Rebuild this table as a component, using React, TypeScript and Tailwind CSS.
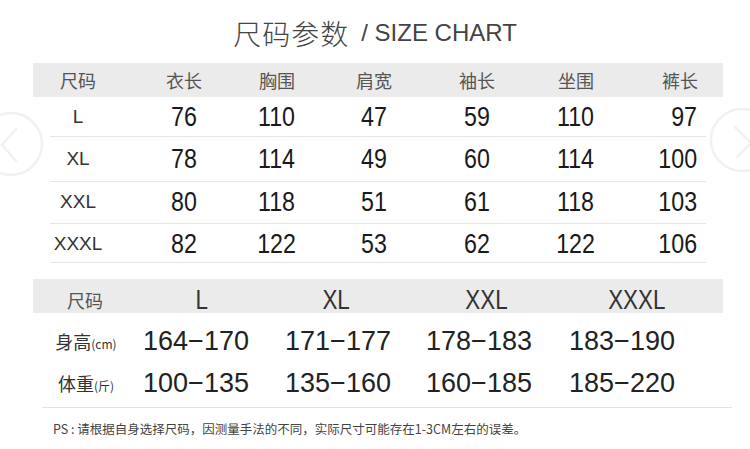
const cjk = '"Noto Sans CJK SC", sans-serif';

const cols1 = 'grid grid-cols-[90px_122px_64px_130px_76px_122px_86px]';

const rows1 = [
  { size: 'L', vals: ['76', '110', '47', '59', '110', '97'], h: 'h-[39px]' },
  { size: 'XL', vals: ['78', '114', '49', '60', '114', '100'], h: 'h-[44px]' },
  { size: 'XXL', vals: ['80', '118', '51', '61', '118', '103'], h: 'h-[41px]' },
  { size: 'XXXL', vals: ['82', '122', '53', '62', '122', '106'], h: 'h-[38px]' },
];

const head1 = ['尺码', '衣长', '胸围', '肩宽', '袖长', '坐围', '裤长'];

function Watermark({ dir }: { dir: 'left' | 'right' }) {
  return (
    <svg width="70" height="70" viewBox="0 0 70 70" fill="none" stroke="#f1f1f1" strokeWidth="2.5" strokeLinecap="round">
      <circle cx="35" cy="35" r="31" />
      {dir === 'left' ? (
        <path d="M40 20 L26 36 L40 52" />
      ) : (
        <path d="M28 22 L44 38 L30 52" />
      )}
    </svg>
  );
}

export default function App() {
  return (
    <div className="relative w-[750px] h-[449px] overflow-hidden bg-white" style={{ fontFamily: '"Liberation Sans", "Noto Sans CJK SC", sans-serif' }}>
      {/* slider arrows, faded */}
      <div className="absolute left-[-24px] top-[109px]"><Watermark dir="left" /></div>
      <div className="absolute left-[707px] top-[105px]"><Watermark dir="right" /></div>

      {/* Title */}
      <div className="relative h-[63px] flex items-center justify-center pt-[2px] text-[#444]">
        <span className="text-[28px] font-light tracking-[1px]" style={{ fontFamily: cjk }}>尺码参数</span>
        <span className="ml-[12px] text-[24px] font-light">/ SIZE CHART</span>
      </div>

      {/* Table 1 */}
      <div className="relative ml-[33px] w-[690px]">
        <div className={`${cols1} h-[34px] items-center bg-[#ebebeb] text-[18px] text-[#555]`} style={{ fontFamily: cjk }}>
          {head1.map((h) => (
            <div key={h} className="text-center">{h}</div>
          ))}
        </div>
        {rows1.map((r) => (
          <div key={r.size}>
            <div className={`${cols1} ${r.h} items-center text-[27px] text-[#1a1a1a]`}>
              <div className="text-center text-[19px] text-[#333]">{r.size}</div>
              {r.vals.map((v, i) => (
                <div key={i} className={i === 5 ? 'text-right pr-[26px]' : 'text-center'}>
                  <span className={`inline-block scale-x-[0.86] ${i === 5 ? 'origin-right' : 'origin-center'}`}>{v}</span>
                </div>
              ))}
            </div>
            <div className="mx-[17px] h-px bg-[#e6e6e6]" />
          </div>
        ))}
      </div>

      {/* Table 2 */}
      <div className="relative ml-[33px] mt-[16px] w-[690px]">
        <div className="grid grid-cols-[104px_130px_138px_162px_140px] h-[34px] items-center bg-[#ebebeb] text-[#333]">
          <div className="text-center text-[18px] text-[#555]" style={{ fontFamily: cjk }}>尺码</div>
          {['L', 'XL', 'XXL', 'XXXL'].map((s) => (
            <div key={s} className="text-center text-[28px]">
              <span className="inline-block scale-x-[0.8]">{s}</span>
            </div>
          ))}
        </div>
        <div className="pt-[7px]">
          {[
            { label: '身高', unit: '(cm)', vals: ['164−170', '171−177', '178−183', '183−190'] },
            { label: '体重', unit: '(斤)', vals: ['100−135', '135−160', '160−185', '185−220'] },
          ].map((r) => (
            <div key={r.label} className="grid grid-cols-[106px_114px_170px_112px_174px] h-[42px] items-center text-[27px] text-[#222]">
              <div className="flex items-baseline justify-center text-[#333]" style={{ fontFamily: cjk }}>
                <span className="text-[18px]">{r.label}</span>
                <span className="text-[12px]">{r.unit}</span>
              </div>
              {r.vals.map((v) => (
                <div key={v} className="text-center whitespace-nowrap">{v}</div>
              ))}
            </div>
          ))}
        </div>
      </div>
      <div className="ml-[42px] mt-[3px] w-[690px] h-px bg-[#e3e3e3]" />

      {/* Note */}
      <div className="ml-[53px] mt-[12px] text-[12.5px] text-[#444]" style={{ fontFamily: cjk }}>
        PS : 请根据自身选择尺码，因测量手法的不同，实际尺寸可能存在1-3CM左右的误差。
      </div>
    </div>
  );
}
